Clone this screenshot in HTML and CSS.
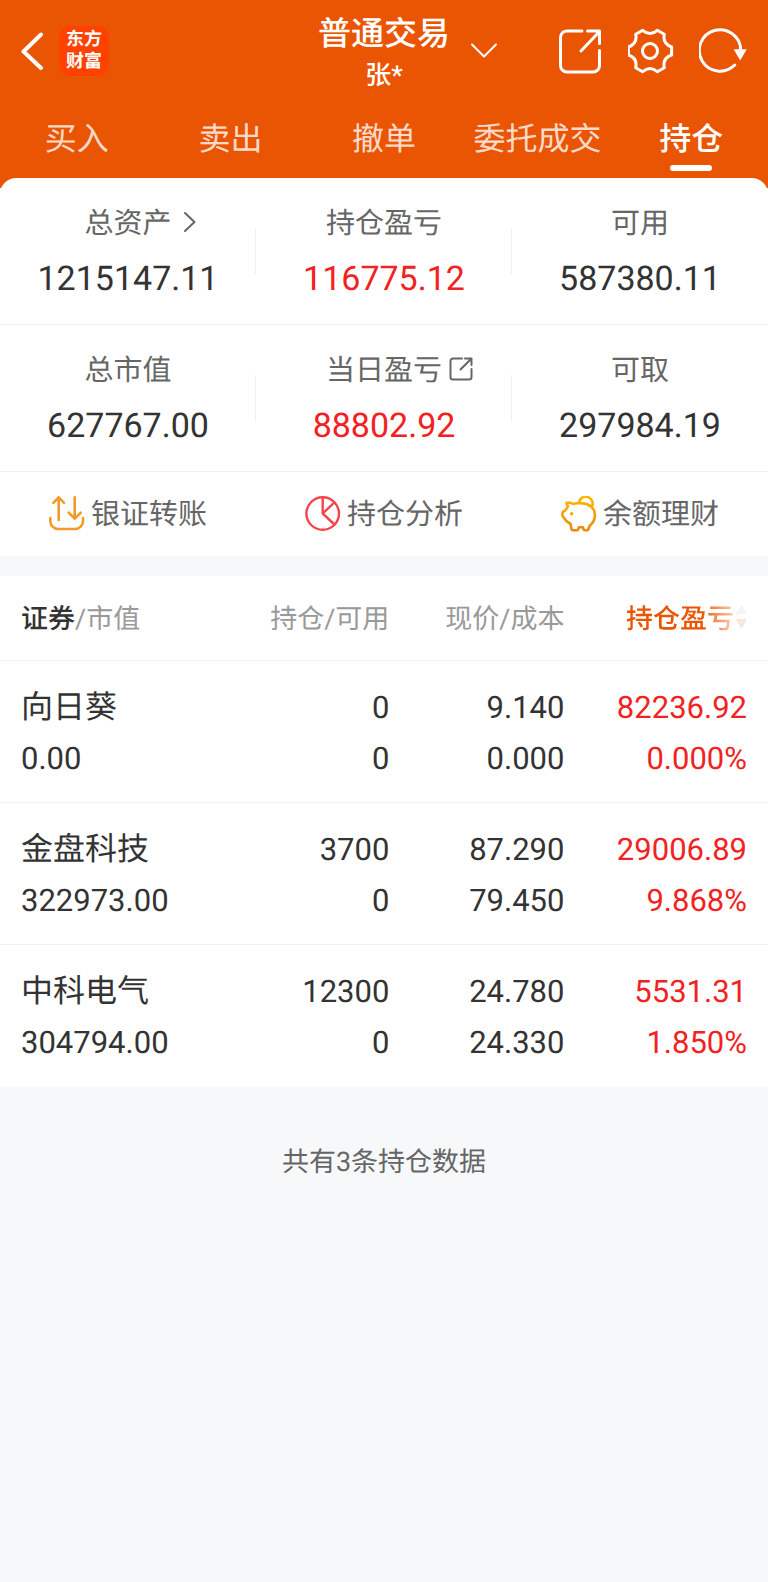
FILE: index.html
```
<!DOCTYPE html>
<html lang="zh-CN">
<head>
    <meta charset="UTF-8">
    <meta name="viewport" content="width=device-width, initial-scale=1.0">
    <title>普通交易 - 持仓</title>
    <link rel="stylesheet" href="styles.css">
</head>
<body>
    <header class="header">
        <div class="topbar">
            <div class="topbar-left">
                <button type="button" class="icon-btn" aria-label="返回">
                    <svg class="back" viewBox="0 0 22 40"><path d="M20 3.500 2.500 20.500 20 37"/></svg>
                </button>
                <a href="#" class="logo">东方<br>财富</a>
            </div>
            <div class="account">
                <div>
                    <h1>普通交易</h1>
                    <p>张*</p>
                </div>
                <button type="button" class="icon-btn switch" aria-label="切换账户">
                    <svg viewBox="0 0 26 16"><path d="M1 1.500 13 13.500 25 1.500"/></svg>
                </button>
            </div>
            <div class="topbar-right">
                <button type="button" class="icon-btn" aria-label="分享">
                    <svg class="tool" viewBox="0 0 48 48"><path d="M25 4H10a6.500 6.500 0 0 0-6.500 6.500v28A6.500 6.500 0 0 0 10 45h26a6.500 6.500 0 0 0 6.500-6.500V23.500M24 24 42 5M30.500 4h12v12.500"/></svg>
                </button>
                <button type="button" class="icon-btn" aria-label="设置">
                    <svg class="tool" viewBox="-22 -24 48 48">
                        <path d="M21.600-4V4Q12.300 7.100 14.300 16.700L7.300 20.700Q0 14.200-7.300 20.700L-14.300 16.700Q-12.300 7.100-21.600 4V-4Q-12.300-7.100-14.300-16.700L-7.300-20.700Q0-14.200 7.300-20.700L14.300-16.700Q12.300-7.100 21.600-4Z"/>
                        <circle cx="0" cy="0" r="7.500"/>
                    </svg>
                </button>
                <button type="button" class="icon-btn" aria-label="刷新">
                    <svg class="tool" viewBox="0 0 48 48">
                        <path d="M41.700 23A20.700 20.700 0 1 0 35.700 38"/>
                        <path class="solid" d="M34.700 22.300h13L41.200 33.500z"/>
                    </svg>
                </button>
            </div>
        </div>
        <nav class="tabs">
            <a href="#">买入</a>
            <a href="#">卖出</a>
            <a href="#">撤单</a>
            <a href="#">委托成交</a>
            <a href="#" class="active">持仓</a>
        </nav>
    </header>

    <main>
        <section class="summary">
            <div class="stats">
                <div class="stat">
                    <div class="label">总资产<svg class="more" viewBox="0 0 12 20"><path d="M1 1 10.500 10 1 19"/></svg></div>
                    <div class="value">1215147.11</div>
                </div>
                <div class="stat">
                    <div class="label">持仓盈亏</div>
                    <div class="value up">116775.12</div>
                </div>
                <div class="stat">
                    <div class="label">可用</div>
                    <div class="value">587380.11</div>
                </div>
            </div>
            <div class="stats">
                <div class="stat">
                    <div class="label">总市值</div>
                    <div class="value">627767.00</div>
                </div>
                <div class="stat">
                    <div class="label">当日盈亏<svg class="open" viewBox="0 0 24 24"><path d="M13 1.500H4A2.500 2.500 0 0 0 1.500 4v16A2.500 2.500 0 0 0 4 22.500h16a2.500 2.500 0 0 0 2.500-2.500V12M11.500 12.500 22 2M16 1.500h6.500V8"/></svg></div>
                    <div class="value up">88802.92</div>
                </div>
                <div class="stat">
                    <div class="label">可取</div>
                    <div class="value">297984.19</div>
                </div>
            </div>
            <div class="actions">
                <a href="#">
                    <svg class="transfer" viewBox="0 0 36 36" stroke-width="2.6"><path d="M9.700 24V1.500M4.300 6.800 9.700 1.300 15 6.800M25.700 1.300V22.700M19.700 16.700 25.700 22.700 31.700 16.700M1.300 22v3a8 8 0 0 0 8 8h16.700a8 8 0 0 0 8-8V22"/></svg>
                    <span>银证转账</span>
                </a>
                <a href="#">
                    <svg class="analysis" viewBox="0 0 36 36" stroke-width="2.4"><circle cx="17.700" cy="17.500" r="16.300"/><path d="M17.700 1.500V17.500L29.300 6.500M17.700 17.500 29.500 28.500"/></svg>
                    <span>持仓分析</span>
                </a>
                <a href="#">
                    <svg class="piggy" viewBox="0 0 36 36" stroke-width="2.6">
                        <defs>
                            <linearGradient id="gold" x1="0" y1="0" x2="0" y2="1">
                                <stop offset="0" stop-color="#fcb900"/>
                                <stop offset="1" stop-color="#e88a12"/>
                            </linearGradient>
                        </defs>
                        <path stroke="url(#gold)" d="M18 7.500a6.800 6.800 0 1 1 12.800 3.200M5.500 6.700q4-.5 7 1.300 4-1.300 8-.9c8 .5 13.500 5 13.500 11.900 0 5-2.500 8.500-5.500 11l-1.200 3.500q-.3.800-1.300.8h-2q-1 0-1.300-.8l-.8-2.300h-4l-.8 2.300q-.3.800-1.300.8h-4q-1 0-1.200-.8L9.500 28Q5 25.500 2.700 21.500 1.300 20.300 1.300 18.500 1.300 15.500 3.500 15 6.500 12 7 10 5.500 8.500 5.500 6.700Z"/>
                        <circle cx="10.600" cy="17.800" r="1.700"/>
                    </svg>
                    <span>余额理财</span>
                </a>
            </div>
        </section>

        <table class="holdings">
            <thead>
                <tr>
                    <th><b>证券</b>/市值</th>
                    <th>持仓/可用</th>
                    <th>现价/成本</th>
                    <th>
                        <button type="button" class="sort">持仓盈亏<svg viewBox="0 0 11 24"><path class="asc" d="M5.500 0 11 9H0z"/><path d="M5.500 24 11 14H0z"/></svg></button>
                    </th>
                </tr>
            </thead>
            <tbody>
                <tr>
                    <td><div class="name">向日葵</div><div>0.00</div></td>
                    <td><div>0</div><div>0</div></td>
                    <td><div>9.140</div><div>0.000</div></td>
                    <td class="up"><div>82236.92</div><div>0.000%</div></td>
                </tr>
                <tr>
                    <td><div class="name">金盘科技</div><div>322973.00</div></td>
                    <td><div>3700</div><div>0</div></td>
                    <td><div>87.290</div><div>79.450</div></td>
                    <td class="up"><div>29006.89</div><div>9.868%</div></td>
                </tr>
                <tr>
                    <td><div class="name">中科电气</div><div>304794.00</div></td>
                    <td><div>12300</div><div>0</div></td>
                    <td><div>24.780</div><div>24.330</div></td>
                    <td class="up"><div>5531.31</div><div>1.850%</div></td>
                </tr>
            </tbody>
        </table>

        <p class="total">共有3条持仓数据</p>
    </main>
</body>
</html>
```
FILE: styles.css
```
* {
    box-sizing: border-box;
}
body {
    margin: 0;
    font-family: Roboto, "Noto Sans CJK SC", sans-serif;
    text-rendering: geometricPrecision;
    background-color: #f7f8fa;
    color: #333;
}
h1, p {
    margin: 0;
}
a {
    color: inherit;
    text-decoration: none;
}
button {
    padding: 0;
    border: none;
    background: none;
    font-family: inherit;
    text-rendering: inherit;
    cursor: pointer;
}
svg {
    display: block;
    flex: none;
    fill: none;
    stroke: currentColor;
    stroke-linecap: round;
    stroke-linejoin: round;
}

/* header */
.header {
    background-color: #ea5504;
    color: white;
    padding-bottom: 10px;
}
.topbar {
    display: grid;
    grid-template-columns: 1fr auto 1fr;
    align-items: center;
    height: 102px;
    padding: 0 21px;
}
.topbar-left,
.topbar-right,
.account {
    display: flex;
    align-items: center;
}
.topbar-left {
    gap: 16px;
}
.topbar-right {
    justify-content: flex-end;
    gap: 23px;
}
.icon-btn {
    color: white;
}
.back {
    width: 22px;
    height: 40px;
    stroke-width: 4;
}
.logo {
    width: 50px;
    height: 50px;
    padding: 3px 0;
    border-radius: 10px;
    background-color: #ff4200;
    font-size: 18px;
    font-weight: 700;
    line-height: 22px;
    text-align: center;
}
.account {
    text-align: center;
}
.account h1 {
    padding-top: 8px;
    font-size: 33px;
    font-weight: 500;
    line-height: 42px;
}
.account p {
    font-size: 26px;
    font-weight: 500;
    line-height: 40px;
}
/* the arrow hangs outside so that the title stays centred */
.switch {
    margin: 0 -47px 0 21px;
}
.switch svg {
    width: 26px;
    height: 16px;
    stroke-width: 2;
}
.tool {
    width: 48px;
    height: 48px;
    stroke-width: 3;
}
.tool .solid {
    fill: currentColor;
    stroke: none;
}
.tabs {
    display: grid;
    grid-template-columns: repeat(5, 1fr);
}
.tabs a {
    display: flex;
    flex-direction: column;
    align-items: center;
    height: 76px;
    font-size: 32px;
    line-height: 74px;
    color: rgba(255, 255, 255, 0.8);
}
.tabs .active {
    color: white;
    font-weight: 500;
}
.tabs .active::after {
    content: "";
    width: 42px;
    height: 6px;
    margin-top: -11px;
    border-radius: 3px;
    background-color: white;
}

/* account summary */
.summary {
    position: relative;
    margin-top: -10px;
    margin-bottom: 20px;
    border-radius: 16px 16px 0 0;
    background-color: white;
}
.stats,
.actions {
    display: grid;
    grid-template-columns: repeat(3, 1fr);
}
.stats {
    height: 147px;
    padding-top: 16px;
    border-bottom: 1px solid #f0f0f0;
}
.stat {
    text-align: center;
    background: linear-gradient(#f0f0f0, #f0f0f0) right 34px / 1px 46px no-repeat;
}
.stat:last-child {
    background: none;
}
.label {
    display: flex;
    justify-content: center;
    align-items: center;
    height: 54px;
    font-size: 29px;
    color: #666;
}
.label svg {
    margin-top: 2px;
    stroke-width: 2;
}
.more {
    width: 12px;
    height: 20px;
    margin-left: 12px;
    margin-right: -24px;
}
.open {
    width: 24px;
    height: 24px;
    margin-left: 7px;
    margin-right: -31px;
}
.value {
    font-size: 34px;
    line-height: 62px;
}
.up {
    color: #f32222;
}
.actions a {
    display: flex;
    justify-content: center;
    align-items: center;
    gap: 6px;
    height: 84px;
    font-size: 29px;
    color: #666;
}
.actions span {
    padding-bottom: 4px;
}
.actions svg {
    width: 36px;
    height: 36px;
}
.transfer {
    color: #f39a2b;
}
.analysis {
    color: #f9434b;
}
.piggy circle {
    fill: #f5a30f;
    stroke: none;
}

/* holdings list */
.holdings {
    width: 100%;
    border-collapse: separate;
    border-spacing: 0;
    table-layout: fixed;
    background-color: white;
}
.holdings th,
.holdings td {
    padding: 0;
    text-align: right;
    border-bottom: 1px solid #f3f3f3;
    white-space: nowrap;
}
.holdings th:nth-child(1) {
    width: 24%;
}
.holdings th:nth-child(2) {
    width: 26.7%;
}
.holdings th:nth-child(3) {
    width: 22.8%;
}
.holdings th:first-child,
.holdings td:first-child {
    padding-left: 21px;
    text-align: left;
}
.holdings th:last-child,
.holdings td:last-child {
    padding-right: 21px;
}
.holdings th {
    height: 85px;
    padding-bottom: 3px;
    font-size: 27px;
    font-weight: 400;
    color: #999;
}
.holdings b {
    font-weight: 500;
    color: #333;
}
.holdings td {
    height: 142px;
    padding-top: 2px;
    font-size: 31px;
    line-height: 51px;
}
.holdings tr:last-child td {
    border-bottom: none;
}
.holdings .name {
    font-size: 32px;
}
.sort {
    display: flex;
    align-items: center;
    gap: 2px;
    margin-left: auto;
    font-size: 27px;
    font-weight: 500;
    color: #ea5504;
    -webkit-mask-image: linear-gradient(to right, #000 62%, rgba(0, 0, 0, 0.15) 94%);
    mask-image: linear-gradient(to right, #000 62%, rgba(0, 0, 0, 0.15) 94%);
}
.sort svg {
    width: 11px;
    height: 24px;
    fill: currentColor;
    stroke: none;
}
.sort .asc {
    fill: #bbb;
}

.total {
    padding: 55px 0;
    font-size: 27px;
    line-height: 40px;
    text-align: center;
    color: #666;
}
```
